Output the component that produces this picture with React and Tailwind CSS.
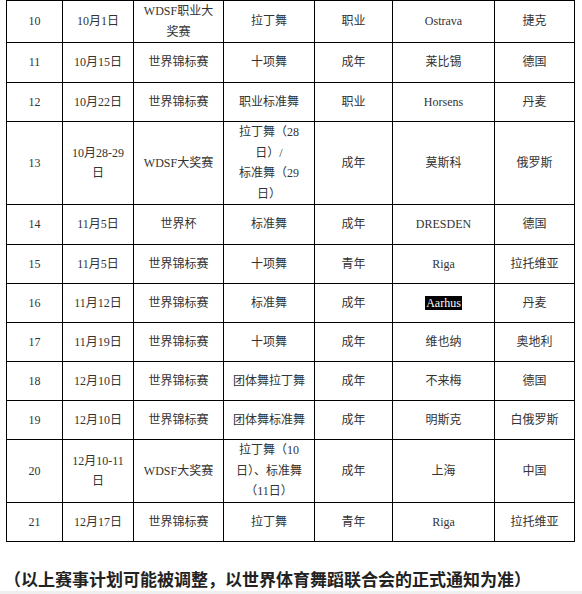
const rows = [
  { h: "h-[42px]", no: "10", date: ["10月1日"], event: ["WDSF职业大", "奖赛"], dance: ["拉丁舞"], group: "职业", city: "Ostrava", country: "捷克" },
  { h: "h-[40px]", no: "11", date: ["10月15日"], event: ["世界锦标赛"], dance: ["十项舞"], group: "成年", city: "莱比锡", country: "德国" },
  { h: "h-[39px]", no: "12", date: ["10月22日"], event: ["世界锦标赛"], dance: ["职业标准舞"], group: "职业", city: "Horsens", country: "丹麦" },
  { h: "h-[82px]", no: "13", date: ["10月28-29", "日"], event: ["WDSF大奖赛"], dance: ["拉丁舞（28", "日）/", "标准舞（29", "日）"], group: "成年", city: "莫斯科", country: "俄罗斯" },
  { h: "h-[40px]", no: "14", date: ["11月5日"], event: ["世界杯"], dance: ["标准舞"], group: "成年", city: "DRESDEN", country: "德国" },
  { h: "h-[39px]", no: "15", date: ["11月5日"], event: ["世界锦标赛"], dance: ["十项舞"], group: "青年", city: "Riga", country: "拉托维亚" },
  { h: "h-[39px]", no: "16", date: ["11月12日"], event: ["世界锦标赛"], dance: ["标准舞"], group: "成年", city: "Aarhus", country: "丹麦", picked: true },
  { h: "h-[39px]", no: "17", date: ["11月19日"], event: ["世界锦标赛"], dance: ["十项舞"], group: "成年", city: "维也纳", country: "奥地利" },
  { h: "h-[39px]", no: "18", date: ["12月10日"], event: ["世界锦标赛"], dance: ["团体舞拉丁舞"], group: "成年", city: "不来梅", country: "德国" },
  { h: "h-[39px]", no: "19", date: ["12月10日"], event: ["世界锦标赛"], dance: ["团体舞标准舞"], group: "成年", city: "明斯克", country: "白俄罗斯" },
  { h: "h-[63px]", no: "20", date: ["12月10-11", "日"], event: ["WDSF大奖赛"], dance: ["拉丁舞（10", "日）、标准舞", "（11日）"], group: "成年", city: "上海", country: "中国" },
  { h: "h-[39px]", no: "21", date: ["12月17日"], event: ["世界锦标赛"], dance: ["拉丁舞"], group: "青年", city: "Riga", country: "拉托维亚" },
];

const cell = "border border-black px-1 py-0 text-center align-middle font-['Liberation_Serif','Noto_Sans_CJK_SC',serif]";

function Lines({ lines }) {
  return lines.map((l, i) => (
    <span key={i} className="block whitespace-nowrap">{l}</span>
  ));
}

export default function App() {
  return (
    <div className="min-h-[594px] w-[582px] bg-white text-[#333] font-['Liberation_Serif','Noto_Sans_CJK_SC',serif]">
      <table className="ml-[6px] w-[568px] table-fixed border-collapse text-[12px] leading-[20.5px] text-[#333]">
        <colgroup>
          <col className="w-[56px]" />
          <col className="w-[71px]" />
          <col className="w-[90px]" />
          <col className="w-[91px]" />
          <col className="w-[78px]" />
          <col className="w-[102px]" />
          <col className="w-[80px]" />
        </colgroup>
        <tbody>
          {rows.map((r) => (
            <tr key={r.no} className={r.h}>
              <td className={cell}>{r.no}</td>
              <td className={cell}><Lines lines={r.date} /></td>
              <td className={cell}><Lines lines={r.event} /></td>
              <td className={cell}><Lines lines={r.dance} /></td>
              <td className={cell}>{r.group}</td>
              <td className={cell}>
                {r.picked ? <span className="bg-black px-px text-white">{r.city}</span> : r.city}
              </td>
              <td className={cell}>{r.country}</td>
            </tr>
          ))}
        </tbody>
      </table>

      <p className="mt-[25px] pl-[4px] text-[17px] font-bold leading-[24px] whitespace-nowrap text-[#222] font-['Noto_Sans_CJK_SC',sans-serif]">
        （以上赛事计划可能被调整，以世界体育舞蹈联合会的正式通知为准）
      </p>
      <div className="h-[4px] bg-[#efefef]" />
    </div>
  );
}
